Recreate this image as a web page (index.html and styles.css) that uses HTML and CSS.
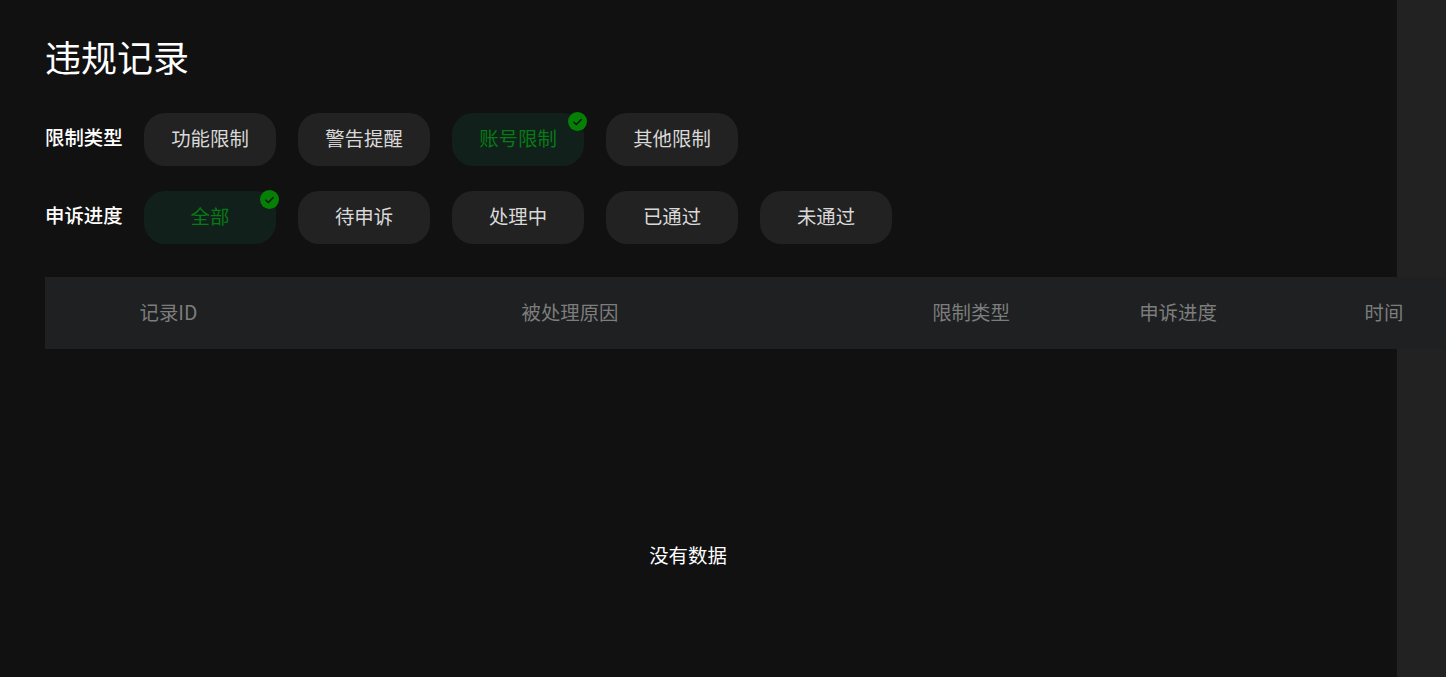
FILE: index.html
```html
<!DOCTYPE html>
<html lang="zh-CN">
<head>
  <meta charset="UTF-8" />
  <title>违规记录</title>
  <link rel="stylesheet" href="styles.css">
</head>
<body>

<div class="page">
  <div class="main">
    <h1 class="page-title">违规记录</h1>

    <!-- Filters -->
    <div class="filter-row">
      <span class="filter-label">限制类型</span>
      <div class="chip">功能限制</div>
      <div class="chip">警告提醒</div>
      <div class="chip active">账号限制
        <svg class="check" viewBox="0 0 19 19"><circle cx="9.5" cy="9.5" r="9.5" fill="#058005"/><path d="M5.4 9.8l2.9 2.7 5.3-5.3" fill="none" stroke="#111" stroke-width="1.4"/></svg>
      </div>
      <div class="chip">其他限制</div>
    </div>
    <div class="filter-row">
      <span class="filter-label">申诉进度</span>
      <div class="chip active">全部
        <svg class="check" viewBox="0 0 19 19"><circle cx="9.5" cy="9.5" r="9.5" fill="#058005"/><path d="M5.4 9.8l2.9 2.7 5.3-5.3" fill="none" stroke="#111" stroke-width="1.4"/></svg>
      </div>
      <div class="chip">待申诉</div>
      <div class="chip">处理中</div>
      <div class="chip">已通过</div>
      <div class="chip">未通过</div>
    </div>

    <!-- Table -->
    <div class="table-head">
      <div>记录ID</div>
      <div>被处理原因</div>
      <div>限制类型</div>
      <div>申诉进度</div>
      <div>时间</div>
    </div>
    <div class="empty">没有数据</div>
  </div>
  <div class="side"></div>
</div>

</body>
</html>
```

FILE: styles.css
```css
html, body {
  height: 100%;
}

body {
  font-family: "Noto Sans CJK SC", "Liberation Sans", sans-serif;
  margin: 0;
  padding: 0;
  background: #111;
  color: #fff;
  overflow: hidden;
}

.page {
  display: flex;
  height: 677px;
  overflow: hidden;
}

.main {
  position: relative;
  z-index: 1;
  flex: 0 0 1397px;
  width: 1397px;
  box-sizing: border-box;
  padding: 29px 0 0 45px;
}

.side {
  flex: 0 0 49px;
  background: #222;
}

.page-title {
  margin: 0 0 29px;
  font-size: 36px;
  line-height: 55px;
  font-weight: 400;
}

.filter-row {
  display: flex;
  align-items: center;
  gap: 22px;
  margin-bottom: 25px;
}

.filter-label {
  width: 77px;
  padding-bottom: 5px;
  font-size: 19.4px;
  line-height: 48px;
  font-weight: 500;
  white-space: nowrap;
}

.chip {
  position: relative;
  width: 132px;
  height: 53px;
  box-sizing: border-box;
  padding-bottom: 4px;
  display: flex;
  align-items: center;
  justify-content: center;
  border-radius: 21px;
  background: #222;
  color: #d9d9d9;
  font-size: 19.4px;
}

.chip.active {
  background: #11201a;
  color: #067a16;
}

.check {
  position: absolute;
  top: -1px;
  right: -3px;
  width: 19px;
  height: 19px;
}

.table-head {
  display: grid;
  grid-template-columns: 247px 556px 246px 168px 244px;
  width: 1461px;
  height: 72px;
  box-sizing: border-box;
  padding-bottom: 4px;
  margin-top: 33px;
  align-items: center;
  text-align: center;
  background: #1e2022;
  color: #7d7d7d;
  font-size: 19.4px;
}

.empty {
  width: 1286px;
  height: 410px;
  display: flex;
  align-items: center;
  justify-content: center;
  font-size: 19.4px;
}
```
